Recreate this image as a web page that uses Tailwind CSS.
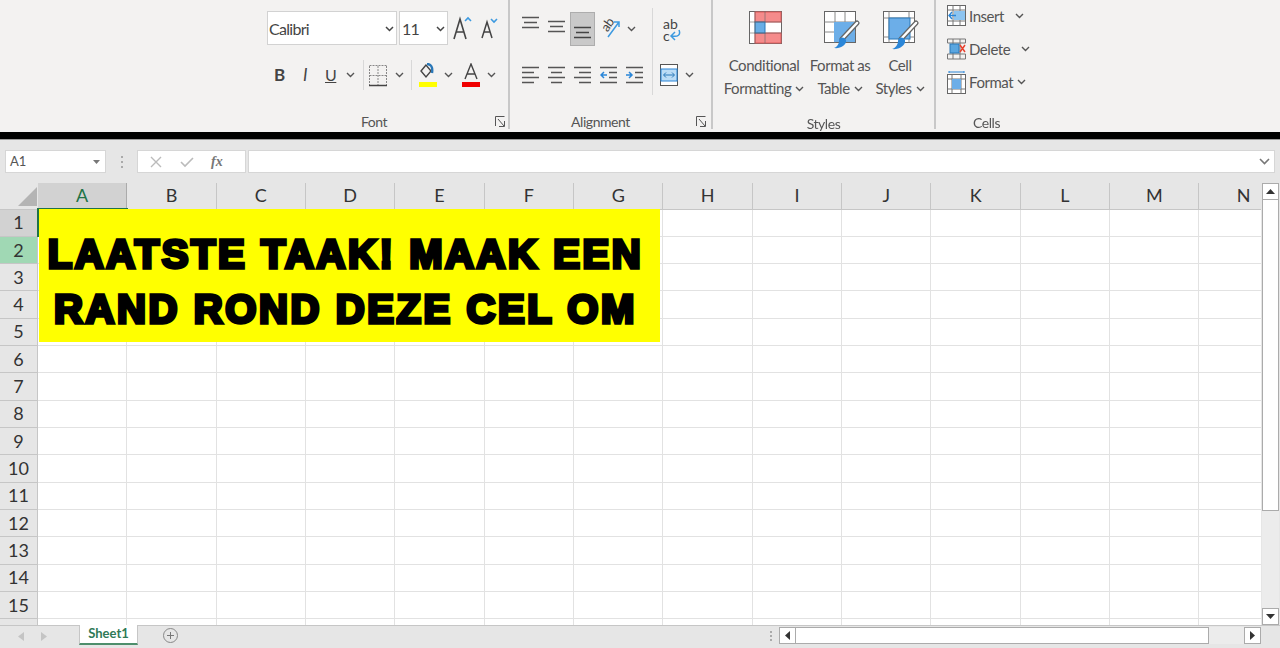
<!DOCTYPE html>
<html lang="nl">
<head>
<meta charset="UTF-8" />
<title>Excel</title>
<script src="https://cdn.jsdelivr.net/npm/@tailwindcss/browser@4"></script>
</head>
<body class="w-[1280px] h-[648px] overflow-hidden bg-[#e6e6e6] font-['Lato',sans-serif] text-[#444]">

<!-- ribbon -->
<div class="h-[132px] bg-[#f3f2f1] flex pl-[262px] text-[15px] tracking-[-0.45px] blur-[0.4px]">

  <!-- font -->
  <div class="relative w-[246px] h-[129px] flex flex-col pl-[5px]">
    <div class="flex items-center mt-[11px] h-[34px]">
      <div class="w-[130px] h-[34px] bg-white border border-[#d2d2d2] flex items-center justify-between pl-[1px] pr-[2px] pt-[2px] text-[#444] text-[16px] tracking-[-0.7px]">Calibri
        <svg width="9" height="6"><path d="M1 1l3.5 3.5L8 1" stroke="#444" stroke-width="1.5" fill="none"/></svg></div>
      <div class="ml-[2px] w-[49px] h-[34px] bg-white border border-[#d2d2d2] flex items-center justify-between pl-[2px] pr-[2px] pt-[2px] text-[16px] tracking-[-0.7px]">11
        <svg width="9" height="6"><path d="M1 1l3.5 3.5L8 1" stroke="#444" stroke-width="1.5" fill="none"/></svg></div>
      <svg class="ml-[5px]" width="20" height="26" viewBox="0 0 20 26"><path d="M1 24L7 4l6 20M3.5 17h7" stroke="#444" stroke-width="1.6" fill="none"/><path d="M12 6l3-3 3 3" stroke="#3d9ae0" stroke-width="1.6" fill="none"/></svg>
      <svg class="ml-[8px]" width="18" height="24" viewBox="0 0 18 24"><path d="M1 22L6 6l5 16M3 16h6" stroke="#444" stroke-width="1.5" fill="none"/><path d="M10 3l3 3 3-3" stroke="#3d9ae0" stroke-width="1.6" fill="none"/></svg>
    </div>
    <div class="flex items-center mt-[15px] h-[30px]">
      <span class="ml-[7px] w-[12px] font-bold text-[17px] text-[#444]">B</span>
      <span class="ml-[17px] w-[12px] italic text-[17px]">I</span>
      <span class="ml-[10px] w-[12px] underline text-[16px]">U</span>
      <svg class="ml-[9px]" width="9" height="6"><path d="M1 1l3.5 3.5L8 1" stroke="#555" stroke-width="1.4" fill="none"/></svg>
      <div class="ml-[8px] w-px h-[30px] bg-[#d8d8d8]"></div>
      <svg class="ml-[5px]" width="18" height="23" viewBox="0 0 18 23"><path d="M.5 2v19M17.5 2v19M.5 1.5h17M.5 11.5h17M9 2v19" stroke="#888" stroke-dasharray="2 1" fill="none"/><path d="M0 21.5h18" stroke="#444" stroke-width="1.5"/></svg>
      <svg class="ml-[8px]" width="9" height="6"><path d="M1 1l3.5 3.5L8 1" stroke="#555" stroke-width="1.4" fill="none"/></svg>
      <div class="ml-[7px] w-px h-[30px] bg-[#d8d8d8]"></div>
      <div class="ml-[6px] w-[19px] h-[24px] flex flex-col items-center justify-between">
        <svg width="17" height="16" viewBox="0 0 17 16"><path d="M7 2L2 8l5 6 5-6z" stroke="#444" stroke-width="1.4" fill="none"/><path d="M8 1c4 0 6 3 5 9" stroke="#2a78b8" stroke-width="2.4" fill="none"/></svg>
        <div class="w-[18px] h-[5px] bg-[#ffff00]"></div>
      </div>
      <svg class="ml-[7px]" width="9" height="6"><path d="M1 1l3.5 3.5L8 1" stroke="#555" stroke-width="1.4" fill="none"/></svg>
      <div class="ml-[8px] w-[19px] h-[24px] flex flex-col items-center justify-between">
        <svg width="14" height="17" viewBox="0 0 14 17"><path d="M1 16L7 1l6 15M3 11h8" stroke="#444" stroke-width="1.4" fill="none"/></svg>
        <div class="w-[18px] h-[5px] bg-[#f00000]"></div>
      </div>
      <svg class="ml-[7px]" width="9" height="6"><path d="M1 1l3.5 3.5L8 1" stroke="#555" stroke-width="1.4" fill="none"/></svg>
    </div>
    <div class="absolute left-0 right-0 top-[111px] text-center text-[14px] text-[#555] pr-[22px]">Font</div>
    <svg class="absolute left-[233px] top-[116px]" width="10" height="11" viewBox="0 0 10 11"><path d="M.5 10V.5h9M3 3l6 7M9.5 5v5.500H4" stroke="#555" fill="none"/></svg>
  </div>
  <div class="w-[2px] h-[129px] bg-[#c8c8c8]"></div>

  <!-- alignment -->
  <div class="relative w-[201px] h-[129px] flex flex-col pl-[12px]">
    <div class="flex items-start mt-[12px] h-[34px]">
      <svg class="mt-[4px]" width="17" height="16" viewBox="0 0 17 16"><path d="M0 1.500h17M2 6.500h13M0 11.500h17" stroke="#555" stroke-width="1.500"/></svg>
      <svg class="ml-[9px] mt-[8px]" width="17" height="16" viewBox="0 0 17 16"><path d="M0 1.500h17M2 6.500h13M0 11.500h17" stroke="#555" stroke-width="1.500"/></svg>
      <div class="ml-[5px] w-[25px] h-[34px] bg-[#c9c9c9] border border-[#adadad] flex items-end justify-center pb-[5px]">
        <svg width="17" height="14" viewBox="0 0 17 14"><path d="M0 1.500h17M2 6.500h13M0 11.500h17" stroke="#444" stroke-width="1.500"/></svg>
      </div>
      <svg class="ml-[5px] mt-[3px] overflow-visible" width="21" height="24" viewBox="0 0 21 24"><text x="2" y="15" font-size="13" transform="rotate(-55 7 11)" fill="#444">ab</text><path d="M8 22L19 7M14 7h5v5" stroke="#3d9ae0" stroke-width="1.500" fill="none"/></svg>
      <svg class="ml-[6px] mt-[14px]" width="9" height="6"><path d="M1 1l3.500 3.500L8 1" stroke="#555" stroke-width="1.400" fill="none"/></svg>
      <div class="ml-[16px] -mt-[4px] w-px h-[87px] bg-[#d8d8d8]"></div>
      <div class="ml-[10px] mt-[6px] w-[18px] h-[24px] relative leading-[12px] text-[14px] tracking-normal text-[#444]">ab<br>c
        <svg class="absolute left-[6px] top-[11px]" width="12" height="12" viewBox="0 0 12 12"><path d="M10 1c2 5-1 7-7 6M6 3L2 7l4 4" stroke="#3d9ae0" stroke-width="1.500" fill="none"/></svg>
      </div>
    </div>
    <div class="flex items-center mt-[18px] h-[22px]">
      <svg width="17" height="19" viewBox="0 0 17 19"><path d="M0 1.500h17M0 6.500h12M0 11.500h17M0 16.500h12" stroke="#555" stroke-width="1.500"/></svg>
      <svg class="ml-[9px]" width="17" height="19" viewBox="0 0 17 19"><path d="M0 1.500h17M3 6.500h11M0 11.500h17M3 16.500h11" stroke="#555" stroke-width="1.500"/></svg>
      <svg class="ml-[9px]" width="17" height="19" viewBox="0 0 17 19"><path d="M0 1.500h17M5 6.500h12M0 11.500h17M5 16.500h12" stroke="#555" stroke-width="1.500"/></svg>
      <svg class="ml-[9px]" width="17" height="19" viewBox="0 0 17 19"><path d="M0 1.500h17M9 6.500h8M9 11.500h8M0 16.500h17" stroke="#555" stroke-width="1.500"/><path d="M7 9H1M4 6L1 9l3 3" stroke="#2a86d8" stroke-width="1.500" fill="none"/></svg>
      <svg class="ml-[9px]" width="17" height="19" viewBox="0 0 17 19"><path d="M0 1.500h17M9 6.500h8M9 11.500h8M0 16.500h17" stroke="#555" stroke-width="1.500"/><path d="M0 9h6M3 6l3 3-3 3" stroke="#2a86d8" stroke-width="1.500" fill="none"/></svg>
      <svg class="ml-[17px]" width="18" height="22" viewBox="0 0 18 22"><rect x=".5" y=".5" width="17" height="21" fill="#fff" stroke="#555"/><rect x="1" y="5" width="16" height="12" fill="#bcdcf5" stroke="#2a86d8"/><path d="M4 11h10M6 8.500L3.500 11 6 13.500M12 8.500l2.500 2.500-2.500 2.500" stroke="#2a78b8" fill="none"/></svg>
      <svg class="ml-[7px]" width="9" height="6"><path d="M1 1l3.500 3.500L8 1" stroke="#555" stroke-width="1.400" fill="none"/></svg>
    </div>
    <div class="absolute left-0 right-0 top-[111px] text-center text-[14px] text-[#555] pr-[20px]">Alignment</div>
    <svg class="absolute left-[186px] top-[116px]" width="10" height="11" viewBox="0 0 10 11"><path d="M.5 10V.5h9M3 3l6 7M9.500 5v5.500H4" stroke="#555" fill="none"/></svg>
  </div>
  <div class="w-[2px] h-[129px] bg-[#c8c8c8]"></div>

  <!-- styles -->
  <div class="relative w-[221px] h-[129px] flex text-[#555] leading-[23px] text-center pt-[11px]">
    <div class="w-[100px] ml-[1px] flex flex-col items-center">
      <svg class="ml-[2px]" width="33" height="33" viewBox="0 0 33 33"><rect x=".5" y=".5" width="32" height="32" fill="#fff" stroke="#666"/><rect x="6" y="1" width="26" height="10" fill="#f58b8b" stroke="#e05a5a"/><rect x="6" y="22" width="26" height="10" fill="#f58b8b" stroke="#e05a5a"/><rect x="6" y="11" width="10" height="11" fill="#69aee6" stroke="#2a78b8"/><path d="M.5 11h32M.5 22h32M6 .5v32M16 .5v10M16 22v10" stroke="#666" stroke-opacity=".6" fill="none"/></svg>
      <div class="mt-[10px]">Conditional</div>
      <div class="flex items-center gap-[4px]">Formatting <svg width="9" height="6"><path d="M1 1l3.500 3.500L8 1" stroke="#555" stroke-width="1.400" fill="none"/></svg></div>
    </div>
    <div class="w-[60px] -ml-[4px] flex flex-col items-center">
      <svg class="ml-[4px]" width="36" height="40" viewBox="0 0 36 40"><rect x=".5" y=".5" width="31" height="31" fill="#fff" stroke="#666"/><path d="M11 .5v31M21 .5v31M.5 11h31M.5 21h31" stroke="#888"/><rect x="10" y="11" width="21" height="20" fill="#6caee8"/><path d="M33 12L18 28" stroke="#666" stroke-width="5" stroke-linecap="round"/><path d="M33 12L18 28" stroke="#fff" stroke-width="2.500" stroke-linecap="round"/><path d="M10 37c6 1 13-3 12-8-2-4-7-3-7 1 0 3-2 6-5 7z" fill="#2a86d8"/></svg>
      <div class="mt-[3px] whitespace-nowrap">Format as</div>
      <div class="flex items-center gap-[4px]">Table <svg width="9" height="6"><path d="M1 1l3.500 3.500L8 1" stroke="#555" stroke-width="1.400" fill="none"/></svg></div>
    </div>
    <div class="w-[60px] flex flex-col items-center">
      <svg class="ml-[2px]" width="36" height="40" viewBox="0 0 36 40"><rect x=".5" y=".5" width="31" height="31" fill="#fff" stroke="#666"/><path d="M.5 7h31M6 .5v31M26 .5v31M.5 26h31" stroke="#888"/><rect x="6" y="7" width="21" height="21" fill="#6caee8" stroke="#2a78b8"/><path d="M33 12L18 28" stroke="#666" stroke-width="5" stroke-linecap="round"/><path d="M33 12L18 28" stroke="#fff" stroke-width="2.500" stroke-linecap="round"/><path d="M9 38c6 1 14-3 13-9-2-4-7-3-7 1 0 3-2 7-6 8z" fill="#2a86d8"/></svg>
      <div class="mt-[3px]">Cell</div>
      <div class="flex items-center gap-[4px]">Styles <svg width="9" height="6"><path d="M1 1l3.500 3.500L8 1" stroke="#555" stroke-width="1.400" fill="none"/></svg></div>
    </div>
    <div class="absolute left-0 right-0 top-[112px] text-[14px]">Styles</div>
  </div>
  <div class="w-[2px] h-[129px] bg-[#c8c8c8]"></div>

  <!-- cells -->
  <div class="relative w-[95px] h-[129px] flex flex-col pl-[11px] pt-[5px] text-[#555] text-[15px]">
    <div class="flex items-center h-[22px]">
      <svg width="19" height="22" viewBox="0 0 19 22"><rect x=".5" y=".5" width="18" height="20" fill="#fff" stroke="#666"/><path d="M.5 5h18M.5 16h18M6 .5v20M13 .5v20" stroke="#777"/><rect x="7" y="6" width="11" height="9" fill="#8cc4f0"/><path d="M9 10.500H2M5 7l-3 3.500L5 14" stroke="#2a86d8" stroke-width="1.400" fill="none"/></svg>
      <span class="ml-[3px]">Insert</span>
      <svg class="ml-[11px]" width="9" height="6"><path d="M1 1l3.500 3.500L8 1" stroke="#555" stroke-width="1.400" fill="none"/></svg>
    </div>
    <div class="flex items-center h-[22px] mt-[11px]">
      <svg width="19" height="22" viewBox="0 0 19 22"><path d="M.5 1h18M.5 21h18M.5 5h18M.5 16h18M6 1v20M13 1v20M.5 1v4M.5 16v5M18.500 1v4M18.500 16v5" stroke="#777" fill="none"/><rect x="3" y="6" width="9" height="9" fill="#5aa6e0" stroke="#2a78b8"/><path d="M13 7l5 7M18 7l-5 7" stroke="#e8412e" stroke-width="1.500"/></svg>
      <span class="ml-[3px]">Delete</span>
      <svg class="ml-[11px]" width="9" height="6"><path d="M1 1l3.500 3.500L8 1" stroke="#555" stroke-width="1.400" fill="none"/></svg>
    </div>
    <div class="flex items-center h-[22px] mt-[11px]">
      <svg width="19" height="23" viewBox="0 0 19 23"><rect x=".5" y="3.500" width="18" height="19" fill="#fff" stroke="#666"/><path d="M.5 8h18M.5 18h18M5 3.500v19M14 3.500v19" stroke="#777"/><rect x="5" y="8" width="9" height="10" fill="#6caee8"/><path d="M2 1h15M2 0v2M17 0v2" stroke="#2a86d8"/></svg>
      <span class="ml-[3px]">Format</span>
      <svg class="ml-[4px]" width="9" height="6"><path d="M1 1l3.500 3.500L8 1" stroke="#555" stroke-width="1.400" fill="none"/></svg>
    </div>
    <div class="absolute left-0 right-0 top-[112px] text-center text-[14px] pl-[6px]">Cells</div>
  </div>
</div>

<!-- black band -->
<div class="h-[7px] bg-black"></div>
<div class="h-px bg-[#9a9a9a]"></div>

<!-- formula bar -->
<div class="h-[43px] flex items-start pt-[10px] pl-[5px] pr-[5px] text-[#555]">
  <div class="w-[101px] h-[23px] bg-white border border-[#d6d6d6] flex items-center justify-between pl-[4px] pr-[5px] text-[13px]">A1
    <svg width="7" height="4"><path d="M0 0h7L3.500 4z" fill="#777"/></svg></div>
  <div class="w-[31px] flex flex-col items-center justify-center gap-[3px] h-[23px]">
    <span class="w-[2px] h-[2px] bg-[#aaa]"></span><span class="w-[2px] h-[2px] bg-[#aaa]"></span><span class="w-[2px] h-[2px] bg-[#aaa]"></span>
  </div>
  <div class="w-[109px] h-[23px] bg-white border border-[#d6d6d6] flex items-center pl-[12px]">
    <svg width="12" height="12" viewBox="0 0 12 12"><path d="M1 1l10 10M11 1L1 11" stroke="#bbb" stroke-width="1.400"/></svg>
    <svg class="ml-[18px]" width="14" height="12" viewBox="0 0 14 12"><path d="M1 6l4 4 8-8" stroke="#bbb" stroke-width="1.600" fill="none"/></svg>
    <span class="ml-[17px] font-['Liberation_Serif',serif] italic font-bold text-[14px] text-[#777]">fx</span>
  </div>
  <div class="ml-[2px] flex-1 h-[23px] bg-white border border-[#d6d6d6] flex items-center justify-end pr-[4px]">
    <svg width="11" height="7"><path d="M1 1l4.500 4.500L10 1" stroke="#777" stroke-width="1.600" fill="none"/></svg>
  </div>
</div>

<!-- sheet -->
<div class="relative h-[442px] flex">
  <div class="w-[1261px] h-[442px] flex flex-col overflow-hidden">
    <div class="flex h-[26.5px] shrink-0 border-b border-[#c6c6c6]" id="colHead">
      <div class="w-[38px] shrink-0 flex items-end justify-end pr-[1px] pb-[3px]">
        <svg width="19" height="19"><path d="M19 0v19H0z" fill="#b4b4b4"/></svg>
      </div>
    </div>
    <div id="rows" class="flex-1 bg-white"></div>
  </div>
  <!-- vertical scroll -->
  <div class="w-[19px] h-[442px] flex flex-col pl-[1px] pr-[1px]">
    <div class="h-[17px] bg-white border border-[#ababab] flex items-center justify-center"><svg width="9" height="5"><path d="M0 5h9L4.500 0z" fill="#333"/></svg></div>
    <div class="h-[311px] bg-white border-x border-b border-[#ababab]"></div>
    <div class="flex-1 bg-[#ececec]"></div>
    <div class="h-[17px] bg-white border border-[#ababab] flex items-center justify-center"><svg width="9" height="5"><path d="M0 0h9L4.500 5z" fill="#333"/></svg></div>
  </div>
  <!-- selection -->
  <div class="absolute left-[37px] top-[25px] w-[91px] h-[29px] border-2 border-[#217346]"></div>
  <!-- banner -->
  <div class="absolute left-[39px] top-[26px] w-[621px] h-[133px] bg-[#ffff00] flex flex-col items-center pt-[18px] pr-[8px] font-['Liberation_Sans',sans-serif] font-bold text-black text-[40px] leading-[55px] tracking-[2.6px] whitespace-nowrap [-webkit-text-stroke:3.5px_black]">
    <div>LAATSTE TAAK! MAAK EEN</div>
    <div>RAND ROND DEZE CEL OM</div>
  </div>
</div>

<!-- tabs -->
<div class="h-[21px] flex items-start border-t border-[#c6c6c6]">
  <div class="w-[79px] h-[20px] flex items-center pl-[18px] gap-[17px]">
    <svg width="6" height="9"><path d="M6 0v9L0 4.500z" fill="#c4c4c4"/></svg>
    <svg width="6" height="9"><path d="M0 0v9l6-4.500z" fill="#c4c4c4"/></svg>
  </div>
  <div class="w-[59px] h-[20px] -mt-px bg-white border-x border-[#c6c6c6] border-b-2 border-b-[#4d8f6c] text-[#2f7a56] font-bold text-[13px] flex items-center justify-center">Sheet1</div>
  <svg class="ml-[25px] mt-[2px]" width="15" height="15" viewBox="0 0 15 15"><circle cx="7.500" cy="7.500" r="7" fill="none" stroke="#888"/><path d="M7.500 4v7M4 7.500h7" stroke="#777"/></svg>
  <div class="ml-[589px] h-[20px] flex flex-col items-center justify-center gap-[2px] w-[8px]">
    <span class="w-[2px] h-[2px] bg-[#aaa]"></span><span class="w-[2px] h-[2px] bg-[#aaa]"></span><span class="w-[2px] h-[2px] bg-[#aaa]"></span>
  </div>
  <div class="ml-[4px] w-[17px] h-[17px] mt-[1px] bg-white border border-[#ababab] flex items-center justify-center"><svg width="5" height="9"><path d="M5 0v9L0 4.500z" fill="#333"/></svg></div>
  <div class="w-[413px] h-[17px] mt-[1px] bg-white border-y border-r border-[#ababab]"></div>
  <div class="w-[35px] h-[17px] mt-[1px] bg-[#ececec]"></div>
  <div class="w-[17px] h-[17px] mt-[1px] bg-white border border-[#ababab] flex items-center justify-center"><svg width="5" height="9"><path d="M0 0v9l5-4.500z" fill="#333"/></svg></div>
</div>

<script>
  const colonnes = "ABCDEFGHIJKLMN".split("");
  const head = document.getElementById("colHead");
  colonnes.forEach((c, i) => {
    const d = document.createElement("div");
    d.className = i === 0
      ? "w-[89.35px] shrink-0 bg-[#d2d2d2] border-r border-[#ababab] text-[#217346] text-[18px] flex items-center justify-center"
      : "w-[89.35px] shrink-0 border-r border-[#c6c6c6] text-[#333] text-[18px] flex items-center justify-center";
    d.textContent = c;
    head.appendChild(d);
  });
  const rows = document.getElementById("rows");
  for (let r = 1; r <= 15; r++) {
    const row = document.createElement("div");
    row.className = "flex h-[27.33px] shrink-0";
    const lab = document.createElement("div");
    lab.className = r === 1
      ? "w-[38px] shrink-0 bg-[#d2d2d2] border-b border-r border-[#c6c6c6] text-[#333] text-[18px] flex items-center justify-center"
      : r === 2
      ? "w-[38px] shrink-0 bg-[#a0d8b4] border-b border-r border-[#c6c6c6] text-[#333] text-[18px] flex items-center justify-center"
      : "w-[38px] shrink-0 bg-[#e6e6e6] border-b border-r border-[#c6c6c6] text-[#333] text-[18px] flex items-center justify-center";
    lab.textContent = r;
    row.appendChild(lab);
    colonnes.forEach(() => {
      const cel = document.createElement("div");
      cel.className = "w-[89.35px] shrink-0 border-r border-b border-[#e2e2e2]";
      row.appendChild(cel);
    });
    rows.appendChild(row);
  }
  // laatste rij is afgesneden, zonder nummer
  const rest = document.createElement("div");
  rest.className = "flex h-[6px] shrink-0";
  const restLab = document.createElement("div");
  restLab.className = "w-[38px] shrink-0 bg-[#e6e6e6] border-r border-[#c6c6c6]";
  rest.appendChild(restLab);
  colonnes.forEach(() => {
    const cel = document.createElement("div");
    cel.className = "w-[89.35px] shrink-0 border-r border-[#e2e2e2]";
    rest.appendChild(cel);
  });
  rows.appendChild(rest);
</script>
</body>
</html>
